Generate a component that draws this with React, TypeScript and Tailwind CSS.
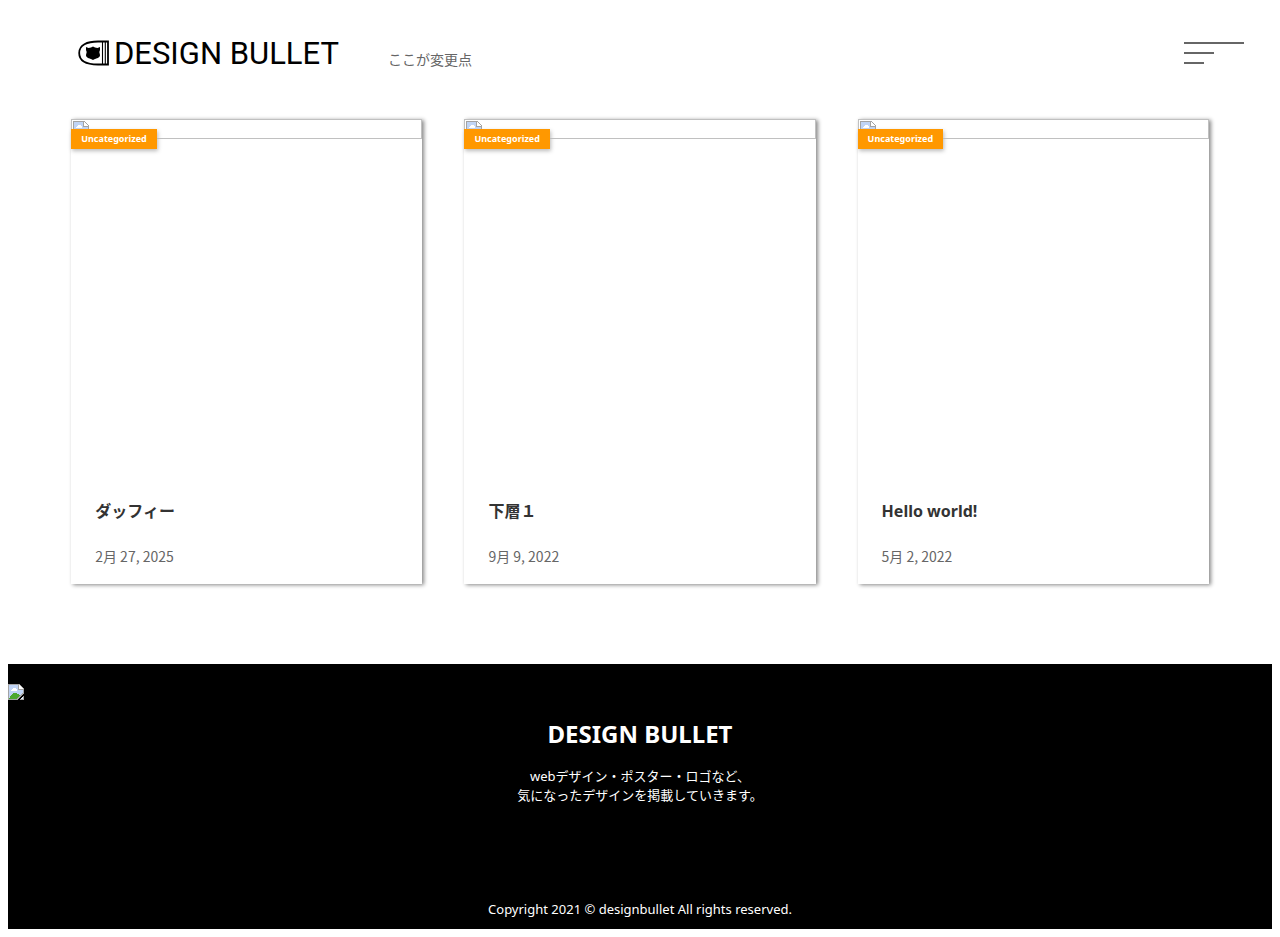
const posts = [
  { title: "ダッフィー", date: "2月 27, 2025" },
  { title: "下層１", date: "9月 9, 2022" },
  { title: "Hello world!", date: "5月 2, 2022" },
];

function MissingImage() {
  return (
    <svg width="16" height="16" viewBox="0 0 16 16" shapeRendering="crispEdges" aria-hidden="true" className="block shrink-0">
      <path d="M0 0H11L16 5V9L9 16H0Z" fill="#a3a3a3" />
      <path d="M1 1H10V6H15V8.5L8.5 15H1Z" fill="#c0d4f5" />
      <path d="M3 7V6H4V5H5V4H8V5H9V7Z" fill="#fff" />
      <path d="M1 15C2 11 5 9 7 9S10 10 12 11.5L8.5 15Z" fill="#4ca82f" />
      <path d="M11 1V5H15Z" fill="#fff" />
      <path d="M16 11V16H11Z" fill="#a3a3a3" />
      <path d="M15 12.5V15H12.5Z" fill="#e3ecf8" />
    </svg>
  );
}

function BulletMark() {
  return (
    <svg width="32" height="26" viewBox="0 0 32 26" aria-hidden="true" className="block">
      <path d="M30 1.5H20C9 1.5 1.2 5 1.2 13S9 24.5 20 24.5H30Z" fill="none" stroke="#000" strokeWidth="1.8" />
      <path d="M24.5 1.5V24.5M27.3 1.5V24.5" stroke="#000" strokeWidth="1.1" />
      <path d="M8 7L10.5 8L13 7.5L15 6.5L17 7.5L19.5 8L22 7V10L21.3 12L22 15C22 18 19 18 15 20C11 18 8 18 8 15L8.7 12L8 10Z" fill="#000" />
    </svg>
  );
}

export default function App() {
  return (
    <div className="bg-white p-2 font-['Noto_Sans','Noto_Sans_CJK_JP',sans-serif] text-[#666]">
      <header className="flex items-start justify-between pt-8 pr-7 pl-[70px]">
        <div className="flex items-start gap-[49px]">
          <a href="#" aria-label="DESIGN BULLET" className="flex items-start gap-1 text-black">
            <BulletMark />
            <span className="font-['Roboto',sans-serif] text-[31px] leading-7">DESIGN BULLET</span>
          </a>
          <p className="pt-[10px] text-sm leading-5">ここが変更点</p>
        </div>
        <button type="button" aria-label="メニュー" className="flex w-[60px] flex-col gap-2 pt-[2px]">
          <span className="h-[2px] w-full bg-[#666]" />
          <span className="h-[2px] w-1/2 bg-[#666]" />
          <span className="h-[2px] w-1/3 bg-[#666]" />
        </button>
      </header>

      <main className="mx-auto mt-[49px] grid w-[90%] grid-cols-3 gap-[42px]">
        {posts.map((post) => (
          <article key={post.title} className="relative shadow-[2px_1px_4px_#888]">
            <a href="#" className="block">
              <div className="h-[360px]">
                <div className="h-5 border border-[#c0c0c0] p-px">
                  <MissingImage />
                </div>
              </div>
              <span className="absolute top-[10px] left-0 bg-[#ff9800] px-[10px] text-[9px] leading-5 font-bold text-white shadow-[1px_2px_4px_#bbb]">
                Uncategorized
              </span>
              <div className="px-6 pt-5 pb-[18px] font-['Noto_Sans_CJK_JP',sans-serif]">
                <h2 className="font-['Noto_Sans','Noto_Sans_CJK_JP',sans-serif] text-base leading-6 font-bold text-[#333]">
                  {post.title}
                </h2>
                <p className="mt-[23px] text-sm leading-5">{post.date}</p>
              </div>
            </a>
          </article>
        ))}
      </main>

      <footer className="mt-20 bg-black pt-5 pb-[10px] text-center text-white">
        <MissingImage />
        <h2 className="mt-4 text-2xl leading-9 font-bold">DESIGN BULLET</h2>
        <p className="mt-[15px] text-[13px] leading-[19px]">
          webデザイン・ポスター・ロゴなど、
          <br />
          気になったデザインを掲載していきます。
        </p>
        <p className="mt-[94px] text-[13px] leading-5">Copyright 2021 © designbullet All rights reserved.</p>
      </footer>
    </div>
  );
}
